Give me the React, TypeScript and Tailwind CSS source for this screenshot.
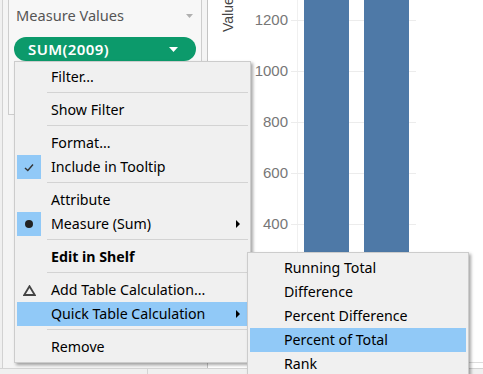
import React from "react";

type Item =
  | { kind: "sep" }
  | {
      kind: "item";
      label: string;
      icon?: "check" | "dot" | "delta";
      arrow?: boolean;
      bold?: boolean;
      active?: boolean;
    };

const mainMenu: Item[] = [
  { kind: "item", label: "Filter..." },
  { kind: "sep" },
  { kind: "item", label: "Show Filter" },
  { kind: "sep" },
  { kind: "item", label: "Format..." },
  { kind: "item", label: "Include in Tooltip", icon: "check" },
  { kind: "sep" },
  { kind: "item", label: "Attribute" },
  { kind: "item", label: "Measure (Sum)", icon: "dot", arrow: true },
  { kind: "sep" },
  { kind: "item", label: "Edit in Shelf", bold: true },
  { kind: "sep" },
  { kind: "item", label: "Add Table Calculation...", icon: "delta" },
  { kind: "item", label: "Quick Table Calculation", arrow: true, active: true },
  { kind: "sep" },
  { kind: "item", label: "Remove" },
];

const subMenu: Item[] = [
  { kind: "item", label: "Running Total" },
  { kind: "item", label: "Difference" },
  { kind: "item", label: "Percent Difference" },
  { kind: "item", label: "Percent of Total", active: true },
  { kind: "item", label: "Rank" },
];

function Icon({ icon }: { icon?: "check" | "dot" | "delta" }) {
  if (icon === "check") {
    return (
      <div className="w-[24px] h-[24px] bg-[#91c9f7] flex items-center justify-center">
        <svg width="10" height="9" viewBox="0 0 10 9">
          <polyline points="1,5 3.8,7.5 9,1.5" fill="none" stroke="#333" strokeWidth="1.4" />
        </svg>
      </div>
    );
  }
  if (icon === "dot") {
    return (
      <div className="w-[24px] h-[24px] bg-[#91c9f7] flex items-center justify-center">
        <div className="w-[8px] h-[8px] rounded-full bg-[#222]" />
      </div>
    );
  }
  if (icon === "delta") {
    return (
      <div className="w-[24px] h-[24px] flex items-center justify-center">
        <svg width="13" height="11" viewBox="0 0 13 11">
          <polygon points="6.5,1.2 11.8,10 1.2,10" fill="none" stroke="#444" strokeWidth="1.8" />
        </svg>
      </div>
    );
  }
  return <div className="w-[24px] h-[24px]" />;
}

function MenuRows({ items }: { items: Item[] }) {
  return (
    <>
      {items.map((it, i) =>
        it.kind === "sep" ? (
          <div key={i} className="h-[9px] pt-[3px]">
            <div className="h-px ml-[30px] bg-[#d3d3d3]" />
          </div>
        ) : (
          <div
            key={i}
            className={`h-[24px] flex items-center text-[14.2px] text-black ${it.active ? "bg-[#91c9f7]" : ""}`}
          >
            <Icon icon={it.icon} />
            <span className={`ml-[10px] whitespace-nowrap ${it.bold ? "font-bold" : ""}`}>{it.label}</span>
            {it.arrow && (
              <svg className="ml-auto mr-[8px]" width="4" height="8" viewBox="0 0 4 8">
                <polygon points="0,0 4,4 0,8" fill="#000" />
              </svg>
            )}
          </div>
        )
      )}
    </>
  );
}

function Chart() {
  // only the ticks that are not hidden under the menus
  const ticks = [
    { v: "1200", y: 20 },
    { v: "1000", y: 71 },
    { v: "800", y: 122 },
    { v: "600", y: 173 },
    { v: "400", y: 224 },
  ];
  return (
    <div className="flex-1 bg-white">
      <svg width="275" height="368" viewBox="0 0 275 368">
        <text
          transform="translate(25,32) rotate(-90)"
          fontFamily="Liberation Sans, sans-serif"
          fontSize="14"
          fill="#444"
        >
          Value
        </text>
        <line x1="89.5" y1="0" x2="89.5" y2="362" stroke="#f0f0f0" />
        {[20, 71, 122, 173, 224, 275, 326].map((y) => (
          <line key={y} x1="83" y1={y + 0.5} x2="208" y2={y + 0.5} stroke="#ececec" />
        ))}
        {ticks.map((t) => (
          <text
            key={t.v}
            x="80"
            y={t.y + 5}
            textAnchor="end"
            fontFamily="Liberation Sans, sans-serif"
            fontSize="15"
            fill="#777"
          >
            {t.v}
          </text>
        ))}
        <rect x="96" y="0" width="45" height="362" fill="#4e79a7" />
        <rect x="156" y="0" width="45" height="362" fill="#4e79a7" />
        <line x1="0" y1="362.5" x2="275" y2="362.5" stroke="#dcdcdc" />
      </svg>
    </div>
  );
}

export default function App() {
  return (
    <div className="relative w-[483px] h-[374px] overflow-hidden bg-white font-['Noto_Sans',sans-serif]">
      <div className="flex h-[368px]">
        {/* left shelf panel */}
        <div className="w-[208px] h-full bg-[#f0f0f0] border-r border-[#c4c4c4] pl-[2px]">
          <div className="h-full border-l border-[#d2d2d2] bg-[#f4f4f4] pl-[5px] pr-[5px]">
            <div className="h-[115px] border-x border-b border-[#cdcdcd] bg-[#f7f7f7]">
              <div className="h-[32px] flex items-center pl-[7px] pr-[8px]">
                <span className="text-[14.6px] text-[#555]">Measure Values</span>
                <svg className="ml-auto" width="7" height="4" viewBox="0 0 7 4">
                  <polygon points="0,0 7,0 3.5,4" fill="#b0b0b0" />
                </svg>
              </div>
              <div className="mt-[5px] mx-[5px] h-[24px] rounded-full bg-[#0c9a6b] flex items-center pl-[14px] pr-[18px]">
                <span className="text-[15px] text-white font-semibold tracking-[0.4px]">SUM(2009)</span>
                <svg className="ml-auto" width="9" height="5" viewBox="0 0 9 5">
                  <polygon points="0,0 9,0 4.5,5" fill="#fff" />
                </svg>
              </div>
            </div>
          </div>
        </div>
        <Chart />
      </div>
      <div className="h-[6px] border-t border-[#d4d4d4] bg-[#f0f0f0] flex">
        <div className="w-[148px] border-r border-[#d4d4d4]" />
      </div>

      {/* context menu */}
      <div className="absolute left-[14px] top-[61px] w-[237px] border border-[#cccccc] bg-[#f0f0f0] px-[2px] pt-[3px] pb-[3px] shadow-[2px_2px_3px_rgba(0,0,0,0.35)]">
        <MenuRows items={mainMenu} />
      </div>

      {/* quick table calculation submenu */}
      <div className="absolute left-[247px] top-[252px] w-[222px] border border-[#cccccc] bg-[#f0f0f0] px-[2px] pt-[3px] pb-[3px] shadow-[2px_2px_3px_rgba(0,0,0,0.35)]">
        <MenuRows items={subMenu} />
      </div>
    </div>
  );
}
